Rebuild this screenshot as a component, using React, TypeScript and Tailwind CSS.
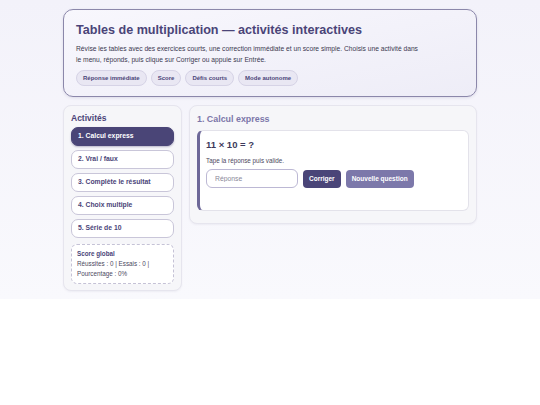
import React from 'react';

const activities = [
  '1. Calcul express',
  '2. Vrai / faux',
  '3. Complète le résultat',
  '4. Choix multiple',
  '5. Série de 10',
];

const chips = ['Réponse immédiate', 'Score', 'Défis courts', 'Mode autonome'];

export default function App() {
  return (
    <div className="bg-gradient-to-b from-[#f3f2fa] to-[#f9f9fd] pt-[9px] pb-[8px] font-['Liberation_Sans',Arial,sans-serif] text-[#3d3a5c]">
      <div className="mx-auto w-[414px]">
        {/* En-tête */}
        <header className="rounded-[10px] border border-[#8b87aa] bg-gradient-to-br from-[#f8f7fd] to-[#eeedf7] px-[12px] pt-[12px] pb-[10px] shadow-[0_1px_3px_rgba(60,50,110,0.12)]">
          <h1 className="text-[12.6px] font-bold leading-[16px] text-[#4a4478]">
            Tables de multiplication — activités interactives
          </h1>
          <p className="mt-[5px] text-[6.7px] leading-[11px] text-[#3b3950]">
            Révise les tables avec des exercices courts, une correction immédiate et un score simple. Choisis une activité dans
            <br />
            le menu, réponds, puis clique sur Corriger ou appuie sur Entrée.
          </p>
          <div className="mt-[5px] flex gap-[4px]">
            {chips.map((c) => (
              <span
                key={c}
                className="flex h-[16px] items-center rounded-full border border-[#d6d3e6] bg-[#e9e7f3] px-[6px] text-[6px] font-bold text-[#4a4478]"
              >
                {c}
              </span>
            ))}
          </div>
        </header>

        <div className="mt-[8px] flex items-start gap-[7px]">
          {/* Menu */}
          <aside className="w-[119px] rounded-[8px] border border-[#e6e5ee] bg-[#f6f6f9] px-[7px] pt-[6px] pb-[6px] shadow-[0_1px_2px_rgba(60,50,110,0.06)]">
            <h2 className="text-[8.5px] font-bold leading-[12px] text-[#4a4478]">Activités</h2>
            <div className="mt-[3px] flex flex-col gap-[4px]">
              {activities.map((a, i) => (
                <button
                  key={a}
                  className={
                    i === 0
                      ? 'h-[19px] rounded-[7px] border border-[#4a4577] bg-[#4a4577] px-[6px] text-left text-[6.8px] font-bold text-white shadow-[0_1px_2px_rgba(40,30,90,0.3)]'
                      : 'h-[19px] rounded-[7px] border border-[#c9c6d9] bg-white px-[6px] text-left text-[6.8px] font-bold text-[#4a4478]'
                  }
                >
                  {a}
                </button>
              ))}
            </div>
            <div className="mt-[6px] rounded-[6px] border border-dashed border-[#c5c2d6] bg-white px-[5px] pt-[4px] pb-[4px] text-[6.3px] leading-[10px] text-[#4b4960]">
              <div className="font-bold text-[#4a4478]">Score global</div>
              <div>Réussites : 0 | Essais : 0 |</div>
              <div>Pourcentage : 0%</div>
            </div>
          </aside>

          {/* Zone d'activité */}
          <main className="flex-1 rounded-[8px] border border-[#e6e5ee] bg-[#f6f6f9] px-[7px] pt-[7px] pb-[12px] shadow-[0_1px_2px_rgba(60,50,110,0.06)]">
            <h2 className="text-[8.9px] font-bold leading-[12px] text-[#7c77a9]">1. Calcul express</h2>
            <div className="mt-[5px] min-h-[81px] rounded-[6px] border border-l-[3px] border-[#e3e2ea] border-l-[#6d6898] bg-white pl-[6px] pr-[8px] pt-[8px] pb-[10px]">
              <div className="text-[9.5px] font-bold leading-[12px] text-[#3d3a5c]">11 × 10 = ?</div>
              <p className="mt-[5px] text-[6.3px] leading-[9px] text-[#4b4960]">Tape la réponse puis valide.</p>
              <div className="mt-[4px] flex items-center gap-[5px]">
                <input
                  placeholder="Réponse"
                  className="h-[19px] w-[92px] rounded-[6px] border border-[#bcb8d4] bg-white px-[8px] text-[6.8px] text-[#3d3a5c] placeholder:text-[#8a8899] outline-none"
                />
                <button className="h-[18px] rounded-[4px] bg-[#4a4578] px-[6px] text-[6.5px] font-bold text-white">
                  Corriger
                </button>
                <button className="h-[18px] rounded-[4px] bg-[#7c78aa] px-[6px] text-[6.5px] font-bold text-white">
                  Nouvelle question
                </button>
              </div>
            </div>
          </main>
        </div>
      </div>
    </div>
  );
}
